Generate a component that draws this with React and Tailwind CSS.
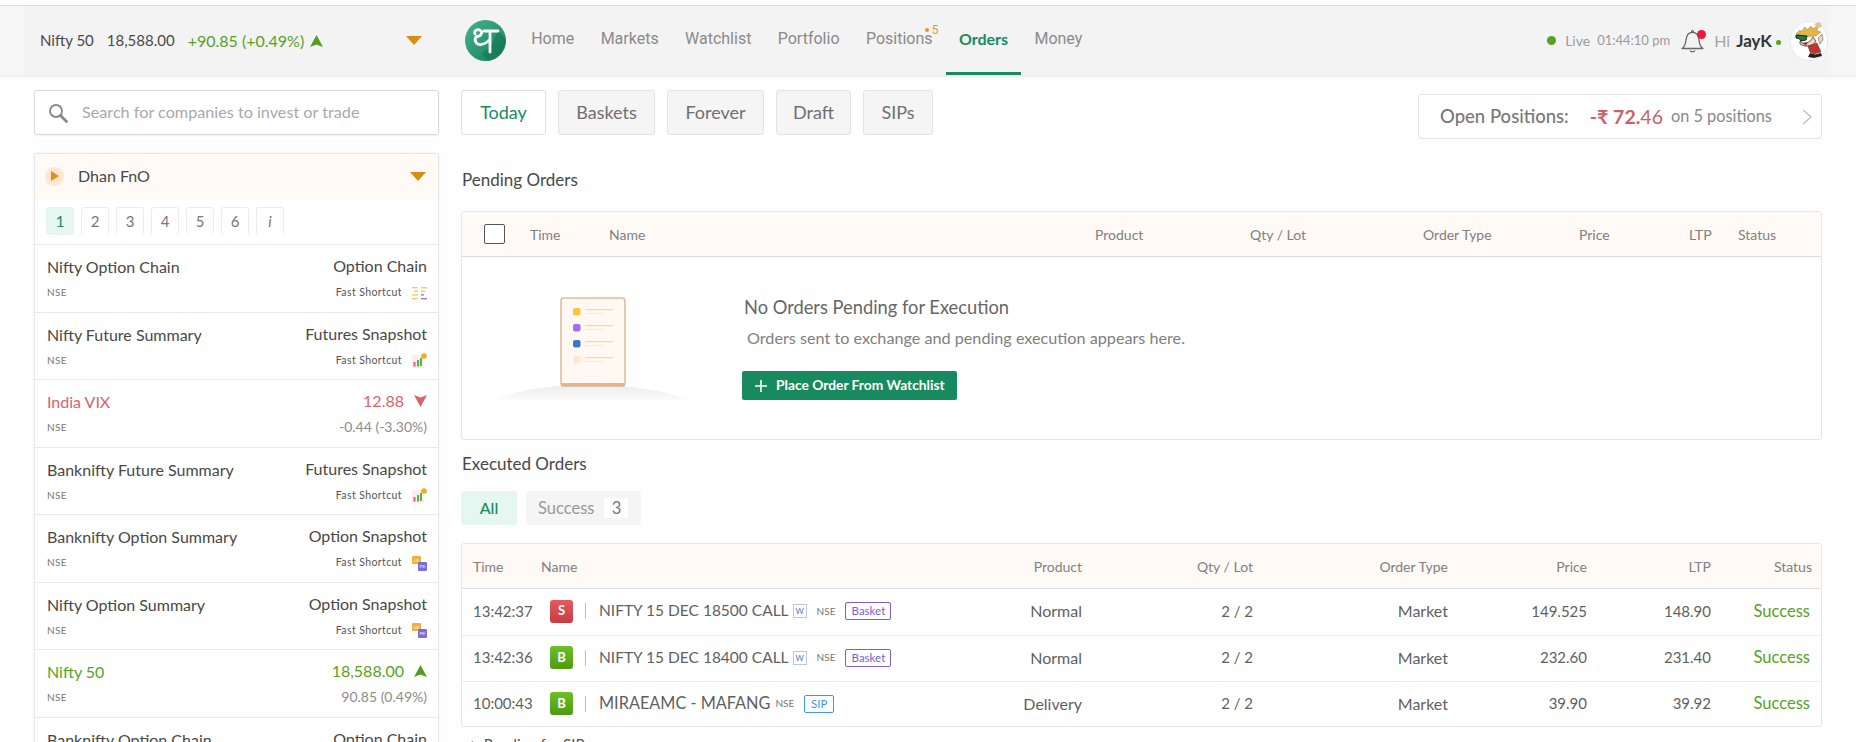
import React from "react";

const Caret = ({ className = "" }) => (
  <svg width="16" height="9" viewBox="0 0 16 9" className={className}><path d="M0 0h16L8 9z" fill="#d98c0e" /></svg>
);
const Up = ({ className = "" }) => (
  <svg width="13" height="12" viewBox="0 0 13 12" className={className}><path d="M6.5 0L13 12L6.5 9.5L0 12z" fill="#4f9e1f" /></svg>
);
const Down = () => (
  <svg width="13" height="12" viewBox="0 0 13 12"><path d="M6.5 12L13 0L6.5 2.5L0 0z" fill="#d9636b" /></svg>
);

const Logo = () => (
  <svg width="41" height="41" viewBox="0 0 41 41" className="shrink-0">
    <defs>
      <linearGradient id="lg" x1="0" y1="0" x2="1" y2="1">
        <stop offset="0" stopColor="#45b48c" />
        <stop offset="1" stopColor="#137f58" />
      </linearGradient>
      <clipPath id="lc"><circle cx="20.5" cy="20.5" r="20.5" /></clipPath>
    </defs>
    <circle cx="20.5" cy="20.5" r="20.5" fill="url(#lg)" />
    <path d="M33 11L48 26V48H30L16 33L25 28z" fill="#14704f" opacity="0.5" clipPath="url(#lc)" />
    <path d="M10 14C8.5 10.5 13 8.5 15.5 10.5C18 12.5 16 16.5 11.5 16.5C8.5 19.5 11 25 16 24.5C20 24 23 21.5 25 19M25 11V32M19 11H33" fill="none" stroke="#fff" strokeWidth="2.8" strokeLinecap="round" strokeLinejoin="round" />
  </svg>
);

const Bell = () => (
  <svg width="24" height="24" viewBox="0 0 24 24" fill="none" stroke="#666" strokeWidth="1.3" className="block">
    <path d="M1 19.5C3.5 18 4.5 15.5 5 11C5.5 6 8 3.3 11.5 3.3C15 3.3 17.5 6 18 11C18.5 15.5 19.5 18 22 19.5z" strokeLinejoin="round" />
    <path d="M9 21.5C10 23.3 13 23.3 14 21.5" />
    <path d="M10.5 3.3C10.5 1 12.5 1 12.5 3.3" />
  </svg>
);

const Avatar = () => (
  <svg width="38" height="40" viewBox="0 0 38 40" className="shrink-0">
    <ellipse cx="19" cy="20" rx="18.5" ry="19.5" fill="#fff" stroke="#bcd8c8" strokeWidth="0.8" strokeDasharray="1.5 1.5" />
    <path d="M6 13L10 9L11 11L15 6L17 9L21 5L23 8L28 4L27 10L31 11L26 15L12 16z" fill="#e3b544" stroke="#8a6a1c" strokeWidth="0.4" />
    <path d="M24 3L30 1L32 6L28 7z" fill="#d8c79b" />
    <path d="M6 14L17 15L16 19L11 20L9 17.5L6 17z" fill="#1f7d40" stroke="#111" strokeWidth="0.9" />
    <path d="M10 20C13 24 19 23 23 16L26 20C24 25 16 27 10 23z" fill="#f3d2bd" stroke="#222" strokeWidth="0.7" />
    <path d="M12.5 22L18 21L16 25z" fill="#a02c3a" />
    <path d="M18 25L27 22L31 31L24 33L20 31z" fill="#c2352d" stroke="#333" strokeWidth="0.5" />
    <path d="M20 32L25 33.5L31 32L32 35L24 37L18 36z" fill="#222" />
    <path d="M28 17L32 13L33 19L30 23z" fill="#f2d3b8" stroke="#444" strokeWidth="0.5" />
  </svg>
);

const ChainIcon = () => (
  <svg width="15" height="13" viewBox="0 0 15 13" className="shrink-0">
    <g fill="#f5c96c">
      <rect x="0" y="0" width="6" height="1.4" /><rect x="2" y="3.6" width="4" height="1.4" /><rect x="0" y="7.2" width="6" height="1.4" /><rect x="0" y="11" width="6" height="1.4" />
      <rect x="9" y="0" width="6" height="1.4" /><rect x="9" y="3.6" width="4" height="1.4" />
    </g>
    <g fill="#8f7bdc"><rect x="9" y="7.2" width="3" height="1.4" /><rect x="9" y="11" width="6" height="1.4" /></g>
  </svg>
);
const FutIcon = () => (
  <svg width="15" height="15" viewBox="0 0 15 15" className="shrink-0">
    <rect x="0" y="2" width="12" height="13" fill="#fbeef2" />
    <rect x="1.5" y="9" width="2" height="4.5" fill="#e7606a" />
    <rect x="5" y="7" width="2" height="6.5" fill="#58b24a" />
    <rect x="8" y="5" width="2" height="8" fill="#58b24a" />
    <circle cx="12" cy="3" r="2.8" fill="#f6a821" />
  </svg>
);
const SnapIcon = () => (
  <svg width="15" height="15" viewBox="0 0 15 15" className="shrink-0">
    <rect x="0" y="0" width="9" height="8" rx="1" fill="#eeb13c" />
    <rect x="6" y="6" width="9" height="9" rx="1" fill="#7b6ddd" />
    <text x="1.5" y="5.5" fontSize="4" fill="#fff" fontFamily="Liberation Sans">CE</text>
    <text x="7.8" y="12" fontSize="4" fill="#fff" fontFamily="Liberation Sans">PE</text>
  </svg>
);

const Illustration = () => (
  <svg width="208" height="108" viewBox="0 0 208 108" className="shrink-0">
    <defs>
      <linearGradient id="arc" x1="0" y1="0" x2="0" y2="1">
        <stop offset="0" stopColor="#ececec" />
        <stop offset="1" stopColor="#ffffff" />
      </linearGradient>
    </defs>
    <path d="M0 106C40 82 160 82 208 106z" fill="url(#arc)" />
    <rect x="73" y="1" width="64" height="88" rx="3" fill="#fff8f3" stroke="#e0bd9e" strokeWidth="1.6" />
    <rect x="73" y="86" width="64" height="3.5" rx="1.5" fill="#dfb593" />
    {[["#fcc33f", 11], ["#a869f4", 27], ["#3c76c8", 43], ["#fde8d8", 59]].map(([c, y]) => (
      <g key={y}>
        <rect x="85" y={y} width="7.5" height="7.5" rx="2.2" fill={c} />
        <rect x="97" y={y + 1} width="28" height="1.2" fill="#fbd98a" />
        <rect x="97" y={y + 5} width="18" height="1" fill="#f3ead8" />
      </g>
    ))}
    <g fill="#f0e4da">
      <circle cx="97" cy="79" r="0.7" /><circle cx="101" cy="79" r="0.7" /><circle cx="105" cy="79" r="0.7" /><circle cx="109" cy="79" r="0.7" /><circle cx="113" cy="79" r="0.7" />
    </g>
  </svg>
);

const rows = [
  { t: "Nifty Option Chain", r: "Option Chain", icon: <ChainIcon /> },
  { t: "Nifty Future Summary", r: "Futures Snapshot", icon: <FutIcon /> },
  { t: "India VIX", v: "12.88", s: "-0.44 (-3.30%)", dir: "down" },
  { t: "Banknifty Future Summary", r: "Futures Snapshot", icon: <FutIcon /> },
  { t: "Banknifty Option Summary", r: "Option Snapshot", icon: <SnapIcon /> },
  { t: "Nifty Option Summary", r: "Option Snapshot", icon: <SnapIcon /> },
  { t: "Nifty 50", v: "18,588.00", s: "90.85 (0.49%)", dir: "up" },
  { t: "Banknifty Option Chain", r: "Option Chain", icon: <ChainIcon /> },
];

const WatchRow = ({ row }) => {
  const color = row.dir === "up" ? "text-[#55a31f]" : row.dir === "down" ? "text-[#d9636b]" : "text-[#484848]";
  return (
    <div className="h-[67.5px] border-t border-[#e9e9e9] pt-[11px] pl-[12px] pr-[11px] flex justify-between shrink-0">
      <div>
        <div className={`text-[16px] leading-[22px] ${color}`}>{row.t}</div>
        <div className="mt-[7px] text-[10px] leading-[14px] text-[#777] tracking-[0.3px]">NSE</div>
      </div>
      <div className="flex flex-col items-end">
        {row.dir ? (
          <>
            <div className={`flex items-center gap-[10px] text-[16px] leading-[20px] ${color}`}>
              {row.v}
              {row.dir === "up" ? <Up /> : <Down />}
            </div>
            <div className="mt-[8px] text-[14px] leading-[16px] text-[#8c8c8c]">{row.s}</div>
          </>
        ) : (
          <>
            <div className="text-[16px] leading-[20px] text-[#484848]">{row.r}</div>
            <div className="mt-[9px] h-[16px] flex items-center">
              <span className="text-[10.5px] text-[#555] tracking-[0.4px]">Fast Shortcut</span>
              <span className="w-[15px] ml-[10px] flex justify-end">{row.icon}</span>
            </div>
          </>
        )}
      </div>
    </div>
  );
};

const navs = ["Home", "Markets", "Watchlist", "Portfolio", "Positions", "Orders", "Money"];

const execRows = [
  { time: "13:42:37", side: "S", name: "NIFTY 15 DEC 18500 CALL", weekly: true, tag: "Basket", prod: "Normal", price: "149.525", ltp: "148.90" },
  { time: "13:42:36", side: "B", name: "NIFTY 15 DEC 18400 CALL", weekly: true, tag: "Basket", prod: "Normal", price: "232.60", ltp: "231.40" },
  { time: "10:00:43", side: "B", name: "MIRAEAMC - MAFANG", tag: "SIP", prod: "Delivery", price: "39.90", ltp: "39.92" },
];

const execCols = "grid grid-cols-[68px_409px_132px_171px_195px_139px_124px_101px] pl-[11px] items-center";
const pendCols = "grid grid-cols-[46px_79px_486px_155px_173px_156px_110px_49px_1fr] pl-[22px] items-center";

export default function App() {
  return (
    <div className="h-[742px] w-[1856px] overflow-hidden bg-[#fefefe] font-['Lato',sans-serif] text-[#484848] flex flex-col">
      <div className="mt-[5px] h-[70px] shrink-0 border-t border-[#dcdcdc] bg-[#f6f6f6] shadow-[0_2px_3px_rgba(0,0,0,0.08)]">
        <div className="h-[69px] mx-[24px] mr-[28px] bg-[#f3f3f3] flex items-center">
          <div className="w-[441px] pl-[16px] pr-[18px] flex items-center shrink-0">
            <div className="flex items-center text-[15px] text-[#4a4a4a]">
              <span>Nifty 50</span>
              <span className="ml-[13px]">18,588.00</span>
              <span className="ml-[13px] text-[16px] text-[#55a31f]">+90.85 (+0.49%)</span>
              <Up className="ml-[6px]" />
            </div>
            <Caret className="ml-[83px]" />
          </div>
          <Logo />
          <nav className="ml-[12px] h-full flex font-['Roboto',sans-serif]">
            {navs.map((n) => (
              <div key={n} className={`relative px-[13.2px] h-full flex items-center pb-[1px] border-b-[3px] text-[16px] ${n === "Orders" ? "border-[#178a60] text-[#178a60] font-bold font-['Lato',sans-serif]" : "border-transparent text-[#8a8a8a]"}`}>
                {n}
                {n === "Positions" && (
                  <>
                    <span className="absolute left-[72px] top-[22px] w-[4px] h-[4px] rounded-full bg-[#e29a1f]" />
                    <span className="absolute left-[79px] top-[15px] text-[12px] text-[#e29a1f]">5</span>
                  </>
                )}
              </div>
            ))}
          </nav>
          <div className="ml-auto flex items-center">
            <span className="w-[9px] h-[9px] rounded-full bg-[#55a31f]" />
            <span className="ml-[9px] text-[14px] text-[#9b9b9b]">Live</span>
            <span className="ml-[7px] text-[13px] text-[#9b9b9b]">01:44:10 pm</span>
            <div className="relative ml-[11px]">
              <Bell />
              <span className="absolute right-[-1px] top-[1px] w-[9px] h-[9px] rounded-full bg-[#f0163c]" />
            </div>
            <span className="ml-[9px] text-[16px] text-[#a5a5a5]">Hi</span>
            <span className="ml-[6px] text-[17px] font-bold text-[#333]">JayK</span>
            <span className="ml-[4px] mt-[4px] w-[5px] h-[5px] rounded-full bg-[#55a31f]" />
            <span className="ml-[9px]"><Avatar /></span>
          </div>
        </div>
      </div>

      <div className="flex flex-1 min-h-0 pt-[15px]">
        <aside className="w-[405px] ml-[34px] shrink-0">
          <div className="h-[45px] rounded-[3px] border border-[#d9d9d9] bg-white flex items-center pl-[13px] shadow-[0_1px_2px_rgba(0,0,0,0.06)]">
            <svg width="20" height="20" viewBox="0 0 20 20" fill="none" stroke="#888" className="shrink-0">
              <circle cx="8" cy="8" r="6" strokeWidth="1.8" />
              <path d="M12.5 12.5L18.5 18.5" strokeWidth="2.8" strokeLinecap="round" />
            </svg>
            <span className="ml-[14px] text-[16.2px] text-[#a9a9a9]">Search for companies to invest or trade</span>
          </div>
          <div className="mt-[18px] rounded-t-[3px] border border-b-0 border-[#e6e6e6] bg-white flex flex-col shadow-[0_0_3px_rgba(0,0,0,0.06)]">
            <div className="h-[46px] bg-[#fffaf6] flex items-center pl-[10px] pr-[12px] pb-[2px]">
              <span className="w-[19px] h-[19px] rounded-full bg-[#fde6d2] flex items-center justify-center">
                <svg width="8" height="10" viewBox="0 0 8 10"><path d="M0 0L8 5L0 10z" fill="#e58d12" /></svg>
              </span>
              <span className="ml-[14px] text-[16px] text-[#484848]">Dhan FnO</span>
              <Caret className="ml-auto" />
            </div>
            <div className="h-[44px] flex items-start pt-[7px] pl-[11px] gap-[7px]">
              {["1", "2", "3", "4", "5", "6", "i"].map((n, i) => (
                <span key={n} className={`w-[28px] h-[28px] rounded-[3px] flex items-center justify-center text-[15px] ${i === 0 ? "bg-[#e6f7f1] text-[#178a60]" : "border border-b-0 border-[#ececec] text-[#777]"} ${n === "i" ? "italic" : ""}`}>{n}</span>
              ))}
            </div>
            {rows.map((r) => <WatchRow key={r.t} row={r} />)}
          </div>
        </aside>

        <main className="ml-[22px] w-[1361px] shrink-0">
          <div className="flex items-start">
            {["Today", "Baskets", "Forever", "Draft", "SIPs"].map((t, i) => (
              <div key={t} className={`h-[45px] flex items-center justify-center rounded-[3px] border text-[18px] ${i === 0 ? "bg-white border-[#e0e0e0] text-[#178a60]" : "bg-[#f5f5f5] border-[#e3e3e3] text-[#6f6f6f]"} ${["w-[85px]", "w-[97px] ml-[12px]", "w-[97px] ml-[12px]", "w-[75px] ml-[12px]", "w-[70px] ml-[12px]"][i]}`}>{t}</div>
            ))}
            <div className="ml-auto mt-[4px] h-[45px] w-[404px] rounded-[3px] border border-[#e4e4e4] bg-white flex items-center pl-[21px] pr-[9px]">
              <span className="text-[18.5px] font-medium text-[#777]">Open Positions:</span>
              <span className="ml-[21px] text-[19.5px] text-[#cf5f66]"><span className="font-bold">-₹ 72.</span>46</span>
              <span className="ml-[8px] text-[16.3px] text-[#888]">on 5 positions</span>
              <svg width="10" height="16" viewBox="0 0 10 16" fill="none" stroke="#c4c4c4" strokeWidth="1.6" className="ml-auto"><path d="M1 1L9 8L1 15" /></svg>
            </div>
          </div>

          <h2 className="mt-[29px] ml-[1px] text-[17px] leading-[24px] font-normal text-[#484848]">Pending Orders</h2>

          <section className="mt-[19px] h-[229px] rounded-[3px] border border-[#e6e6e6] bg-white overflow-hidden">
            <div className={`${pendCols} h-[45px] bg-[#fffaf6] border-b border-[#dedede] text-[14px] text-[#808080]`}>
              <span className="w-[21px] h-[20px] rounded-[2px] border border-[#555] bg-white" />
              <span>Time</span><span>Name</span><span>Product</span><span>Qty / Lot</span><span>Order Type</span><span>Price</span><span>LTP</span><span>Status</span>
            </div>
            <div className="flex pl-[26px] pt-[40px]">
              <Illustration />
              <div className="ml-[46px] -mt-[2px]">
                <div className="ml-[2px] text-[18.3px] leading-[24px] text-[#666]">No Orders Pending for Execution</div>
                <div className="ml-[5px] mt-[8px] text-[16.2px] leading-[22px] text-[#808080]">Orders sent to exchange and pending execution appears here.</div>
                <div className="mt-[22px] w-[215px] h-[29px] rounded-[2px] bg-[#178a60] text-white text-[13.8px] font-bold flex items-center pl-[13px]">
                  <svg width="12" height="12" viewBox="0 0 12 12" stroke="#fff" strokeWidth="1.6"><path d="M6 0V12M0 6H12" /></svg>
                  <span className="ml-[9px]">Place Order From Watchlist</span>
                </div>
              </div>
            </div>
          </section>

          <h2 className="mt-[12px] ml-[1px] text-[17px] leading-[24px] font-normal text-[#484848]">Executed Orders</h2>

          <div className="mt-[15px] flex">
            <div className="w-[56px] h-[34px] rounded-[3px] bg-[#e6f7f1] text-[#178a60] text-[16px] font-medium flex items-center justify-center">All</div>
            <div className="ml-[9px] w-[115px] h-[34px] rounded-[3px] bg-[#f5f5f5] text-[16.5px] text-[#999] flex items-center pl-[12px]">
              <span>Success</span>
              <span className="ml-[10px] w-[24px] h-[20px] rounded-[2px] bg-white text-[#777] flex items-center justify-center">3</span>
            </div>
          </div>

          <section className="mt-[18px] h-[184px] rounded-[3px] border border-[#e6e6e6] bg-white overflow-hidden">
            <div className={`${execCols} h-[45px] bg-[#fffaf6] border-b border-[#dedede] text-[14px] text-[#808080]`}>
              <span>Time</span><span>Name</span>
              <span className="text-right">Product</span><span className="text-right">Qty / Lot</span><span className="text-right">Order Type</span><span className="text-right">Price</span><span className="text-right">LTP</span><span className="text-right">Status</span>
            </div>
            {execRows.map((r, i) => (
              <div key={r.time} className={`${execCols} h-[46px] pb-[2px] text-[15px] text-[#5f5f5f] ${i ? "border-t border-[#ececec]" : ""}`}>
                <span>{r.time}</span>
                <div className="flex items-center -ml-[9px] pl-[18px] whitespace-nowrap">
                  <span className={`w-[23px] h-[23px] rounded-[3px] flex items-center justify-center text-white text-[13px] font-bold ${r.side === "S" ? "bg-gradient-to-b from-[#e45b5f] to-[#c53d42]" : "bg-gradient-to-b from-[#6cc125] to-[#4f9a14]"}`}>{r.side}</span>
                  <span className="ml-[12px] w-px h-[16px] bg-[#bdbdbd]" />
                  <span className={`ml-[13px] ${r.weekly ? "text-[15.5px]" : "text-[16.3px]"}`}>{r.name}</span>
                  {r.weekly && <span className="ml-[4px] w-[14px] h-[14px] border border-[#b9c7e6] text-[#4a6fc2] text-[8px] flex items-center justify-center">W</span>}
                  <span className={`text-[10px] text-[#777] ${r.weekly ? "ml-[10px]" : "ml-[5px]"}`}>NSE</span>
                  <span className={`ml-[10px] h-[18px] rounded-[2px] border flex items-center justify-center text-[11.5px] ${r.tag === "SIP" ? "w-[30px] border-[#3f9be0] text-[#3f9be0]" : "w-[46px] border-[#7a5fd0] text-[#7a5fd0]"}`}>{r.tag}</span>
                </div>
                <span className="text-right text-[16px]">{r.prod}</span>
                <span className="text-right">2 / 2</span>
                <span className="text-right text-[16px]">Market</span>
                <span className="text-right">{r.price}</span>
                <span className="text-right">{r.ltp}</span>
                <span className="text-right pr-[2px] text-[16.5px] text-[#55a31f]">Success</span>
              </div>
            ))}
          </section>
          <div className="mt-[6px] ml-[7px] flex items-center text-[15px] text-[#555]">
            <span>+</span><span className="ml-[7px]">Pending for SIPs</span>
          </div>
        </main>
      </div>
    </div>
  );
}
